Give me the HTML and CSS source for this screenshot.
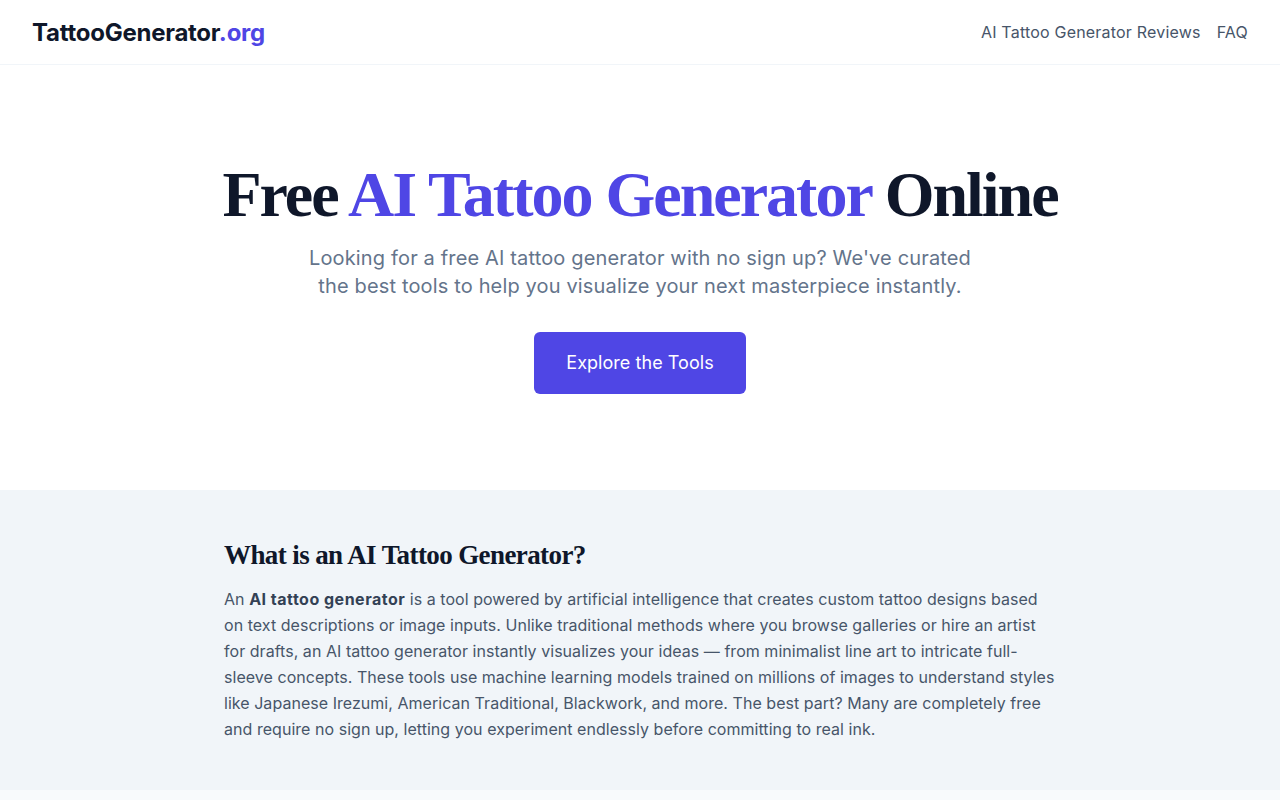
FILE: index.html
```html
<!DOCTYPE html>
<html lang="en">
<head>
  <meta charset="UTF-8">
  <meta name="viewport" content="width=device-width, initial-scale=1.0">
  <title>Free AI Tattoo Generator Online</title>
  <link rel="stylesheet" href="styles.css">
</head>
<body>
  <header class="site-header">
    <a class="logo" href="#">TattooGenerator<span class="logo-tld">.org</span></a>
    <nav class="nav">
      <a href="#reviews">AI Tattoo Generator Reviews</a>
      <a href="#faq">FAQ</a>
    </nav>
  </header>

  <section class="hero">
    <h1 class="hero-title">Free <span class="accent">AI Tattoo Generator</span> Online</h1>
    <p class="hero-sub">Looking for a free AI tattoo generator with no sign up? We've curated the best tools to help you visualize your next masterpiece instantly.</p>
    <a class="btn" href="#tools">Explore the Tools</a>
  </section>

  <section class="about">
    <div class="container">
      <h2 class="about-title">What is an AI Tattoo Generator?</h2>
      <p class="about-body">
        An <strong>AI tattoo generator</strong> is a tool powered by artificial intelligence that creates custom tattoo designs based on text descriptions or image inputs. Unlike traditional methods where you browse galleries or hire an artist for drafts, an AI tattoo generator instantly visualizes your ideas — from minimalist line art to intricate full-sleeve concepts. These tools use machine learning models trained on millions of images to understand styles like Japanese Irezumi, American Traditional, Blackwork, and more. The best part? Many are completely free and require no sign up, letting you experiment endlessly before committing to real ink.
      </p>
    </div>
  </section>

  <section class="next"></section>
</body>
</html>
```

FILE: styles.css
```css
/* Base */
* {
  box-sizing: border-box;
}
body {
  margin: 0;
  font-family: Inter, "Noto Sans", sans-serif;
  color: #0f172a;
  background: #f8fafc;
}
a {
  text-decoration: none;
  color: inherit;
}

/* Header */
.site-header {
  height: 65px;
  display: flex;
  align-items: center;
  justify-content: space-between;
  padding: 0 32px;
  background: #fff;
  border-bottom: 1px solid #f1f5f9;
}
.logo {
  font-size: 24px;
  font-weight: 700;
  letter-spacing: -0.25px;
  color: #0f172a;
}
.logo-tld {
  color: #4f46e5;
}
.nav {
  display: flex;
  gap: 16px;
}
.nav a {
  font-size: 16px;
  letter-spacing: 0.2px;
  color: #475569;
}

/* Hero */
.hero {
  background: #fff;
  padding: 95px 32px 96px;
  text-align: center;
}
.hero-title {
  margin: 0 0 14px;
  font-family: "Liberation Serif", "DejaVu Serif", serif;
  font-size: 64px;
  font-weight: 700;
  line-height: 70px;
  letter-spacing: -2px;
  color: #0f172a;
}
.accent {
  color: #4f46e5;
}
.hero-sub {
  max-width: 672px;
  margin: 0 auto 32px;
  font-size: 20px;
  line-height: 28px;
  letter-spacing: 0.15px;
  color: #64748b;
}
.btn {
  display: inline-block;
  padding: 17px 32px;
  border-radius: 6px;
  background: #4f46e5;
  color: #fff;
  font-size: 18px;
  line-height: 28px;
  letter-spacing: 0.05px;
}

/* About block */
.about {
  background: #f1f5f9;
  padding: 48px 32px;
}
.container {
  max-width: 832px;
  margin: 0 auto;
}
.about-title {
  margin: 0 0 14px;
  font-family: "Liberation Serif", "DejaVu Serif", serif;
  font-size: 27px;
  font-weight: 700;
  line-height: 34px;
  letter-spacing: -0.6px;
  color: #0f172a;
}
.about-body {
  margin: 0;
  font-size: 16px;
  line-height: 26px;
  letter-spacing: 0.04px;
  color: #475569;
}
.about-body strong {
  color: #334155;
  letter-spacing: 0.5px;
}

.next {
  height: 200px;
  background: #f8fafc;
}
```
